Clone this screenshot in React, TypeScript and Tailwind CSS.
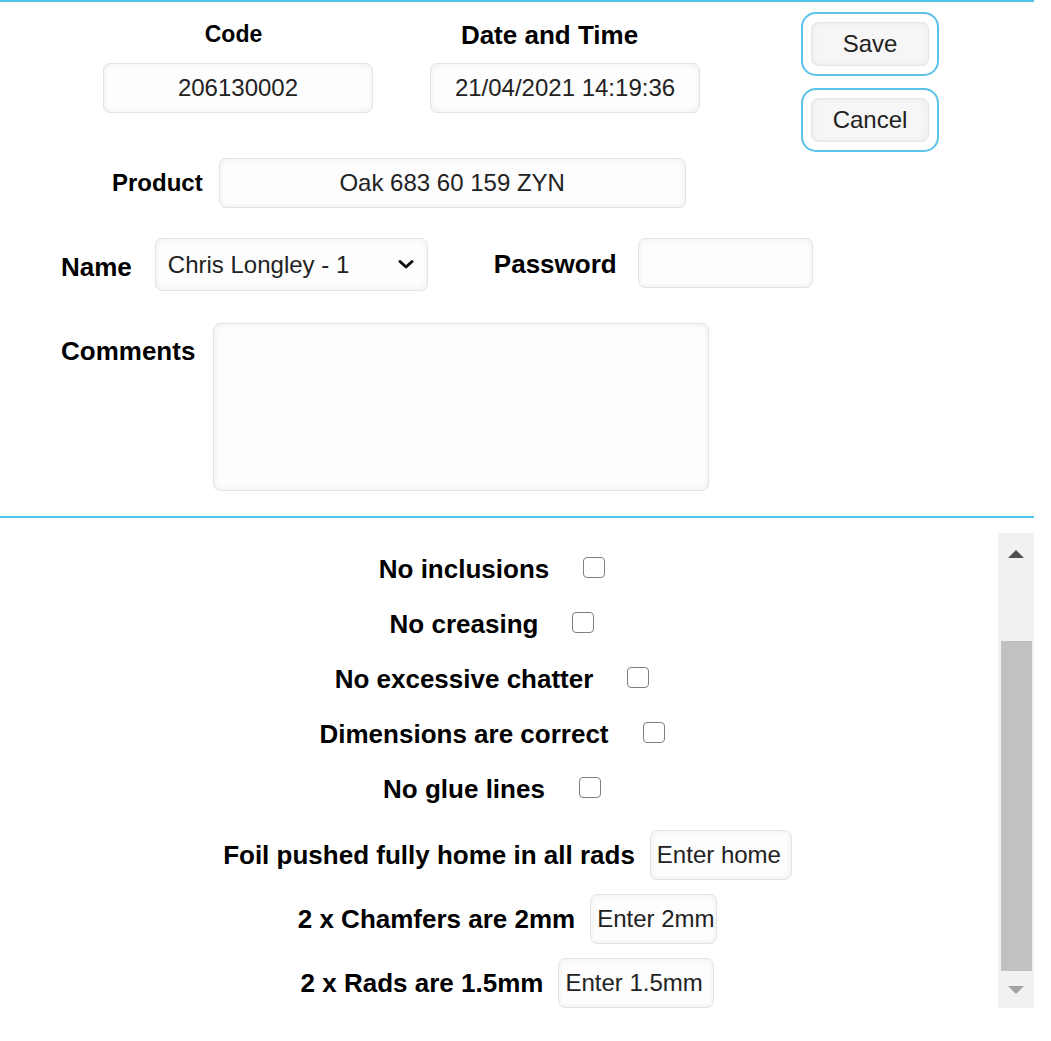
import { useState } from 'react';

const font = { fontFamily: '"Liberation Sans", Arial, sans-serif' };

const fieldClass =
    'bg-[#fdfdfd] border border-[#e3e3e3] rounded-[7px] shadow-[inset_0_0_6px_rgba(0,0,0,0.07)] text-[24px] text-[#222] outline-none';

function ActionButton({ label }: { label: string }) {
    return (
        <div className="w-[138px] h-[64px] border-2 border-[#5ac3e8] rounded-[15px] px-[8px] py-[8px]">
            <button className="w-[118px] h-[44px] bg-[#f6f6f6] border border-[#e6e6e6] rounded-[7px] shadow-[inset_0_0_6px_rgba(0,0,0,0.06)] text-[24px] text-[#222]">
                {label}
            </button>
        </div>
    );
}

function CheckRow({ label }: { label: string }) {
    const [checked, setChecked] = useState(false);
    return (
        <div className="h-[55px] flex items-center justify-center">
            <span className="text-[26px] font-bold text-black">{label}</span>
            <input
                type="checkbox"
                checked={checked}
                onChange={(e) => setChecked(e.target.checked)}
                className="appearance-none w-[22px] h-[21px] ml-[34px] mr-[14px] mb-[5px] border-[1.5px] border-[#808080] rounded-[4px] bg-white checked:bg-[#0075ff]"
            />
        </div>
    );
}

function EntryRow({ label, value, width }: { label: string; value: string; width: string }) {
    return (
        <div className="h-[64px] flex items-center justify-center pl-[17px]">
            <span className="text-[26px] font-bold text-black mr-[15px]">{label}</span>
            <input
                defaultValue={value}
                className={`${fieldClass} ${width} h-[50px] pl-[6px] pr-0 text-[#111]`}
            />
        </div>
    );
}

export default function App() {
    return (
        <div className="w-[1051px] h-[1041px] bg-white overflow-hidden" style={font}>
            <div className="h-[2px] w-[1034px] bg-[#4fc3ea]" />

            {/* Header row */}
            <div className="flex items-start">
                <div className="ml-[103px] w-[270px] flex flex-col items-center">
                    <div className="mt-[19px] mr-[9px] leading-[26px] text-[23px] font-bold text-black">Code</div>
                    <input
                        defaultValue="206130002"
                        className={`${fieldClass} mt-[16px] w-[270px] h-[50px] text-center`}
                    />
                </div>
                <div className="ml-[57px] w-[270px] flex flex-col items-center">
                    <div className="mt-[20px] mr-[31px] leading-[26px] text-[26px] font-bold text-black whitespace-nowrap">Date and Time</div>
                    <input
                        defaultValue="21/04/2021 14:19:36"
                        className={`${fieldClass} mt-[15px] w-[270px] h-[50px] text-center`}
                    />
                </div>
                <div className="ml-[101px] mt-[10px] flex flex-col gap-[12px]">
                    <ActionButton label="Save" />
                    <ActionButton label="Cancel" />
                </div>
            </div>

            {/* Product */}
            <div className="mt-[6px] h-[50px] flex items-center pl-[112px]">
                <span className="text-[24px] font-bold text-black">Product</span>
                <input
                    defaultValue="Oak 683 60 159 ZYN"
                    className={`${fieldClass} ml-[16px] w-[467px] h-[50px] text-center`}
                />
            </div>

            {/* Name / Password */}
            <div className="mt-[30px] h-[53px] flex items-start pl-[61px]">
                <span className="mt-[16px] leading-[26px] text-[26px] font-bold text-black">Name</span>
                <div className={`${fieldClass} ml-[23px] w-[273px] h-[53px] flex items-center justify-between pl-[12px] pr-[13px] text-[#222]`}>
                    <span>Chris Longley - 1</span>
                    <svg width="16" height="11" viewBox="0 0 16 11" fill="none">
                        <path d="M2 2.5 L8 8 L14 2.5" stroke="#111" strokeWidth="3" strokeLinecap="round" strokeLinejoin="round" />
                    </svg>
                </div>
                <span className="ml-[66px] mt-[13px] leading-[26px] text-[26px] font-bold text-black">Password</span>
                <input
                    type="password"
                    className={`${fieldClass} ml-[21px] w-[175px] h-[50px] px-[8px]`}
                />
            </div>

            {/* Comments */}
            <div className="mt-[32px] flex items-start pl-[61px]">
                <span className="mt-[15px] leading-[26px] text-[26px] font-bold text-black">Comments</span>
                <textarea className={`${fieldClass} ml-[18px] w-[496px] h-[168px] resize-none p-[8px]`} />
            </div>

            <div className="mt-[25px] h-[2px] w-[1034px] bg-[#4fc3ea]" />

            {/* Checklist */}
            <div className="mt-[15px] w-[1034px] h-[475px] flex">
                <div className="flex-1 overflow-hidden pt-[9px]">
                    <CheckRow label="No inclusions" />
                    <CheckRow label="No creasing" />
                    <CheckRow label="No excessive chatter" />
                    <CheckRow label="Dimensions are correct" />
                    <CheckRow label="No glue lines" />
                    <div className="mt-[6px]">
                        <EntryRow label="Foil pushed fully home in all rads" value="Enter home" width="w-[142px]" />
                        <EntryRow label="2 x Chamfers are 2mm" value="Enter 2mm" width="w-[127px]" />
                        <EntryRow label="2 x Rads are 1.5mm" value="Enter 1.5mm" width="w-[156px]" />
                    </div>
                </div>
                <div className="w-[36px] h-full bg-[#f1f1f1] flex flex-col items-center">
                    <div className="h-[42px] w-full flex items-center justify-center">
                        <svg width="18" height="10" viewBox="0 0 18 10">
                            <path d="M1 9 L9 1 L17 9 Z" fill="#505050" />
                        </svg>
                    </div>
                    <div className="mt-[66px] w-[31px] h-[330px] bg-[#c1c1c1]" />
                    <div className="flex-1 w-full flex items-center justify-center">
                        <svg width="18" height="10" viewBox="0 0 18 10">
                            <path d="M1 1 L17 1 L9 9 Z" fill="#a3a3a3" />
                        </svg>
                    </div>
                </div>
            </div>
        </div>
    );
}
